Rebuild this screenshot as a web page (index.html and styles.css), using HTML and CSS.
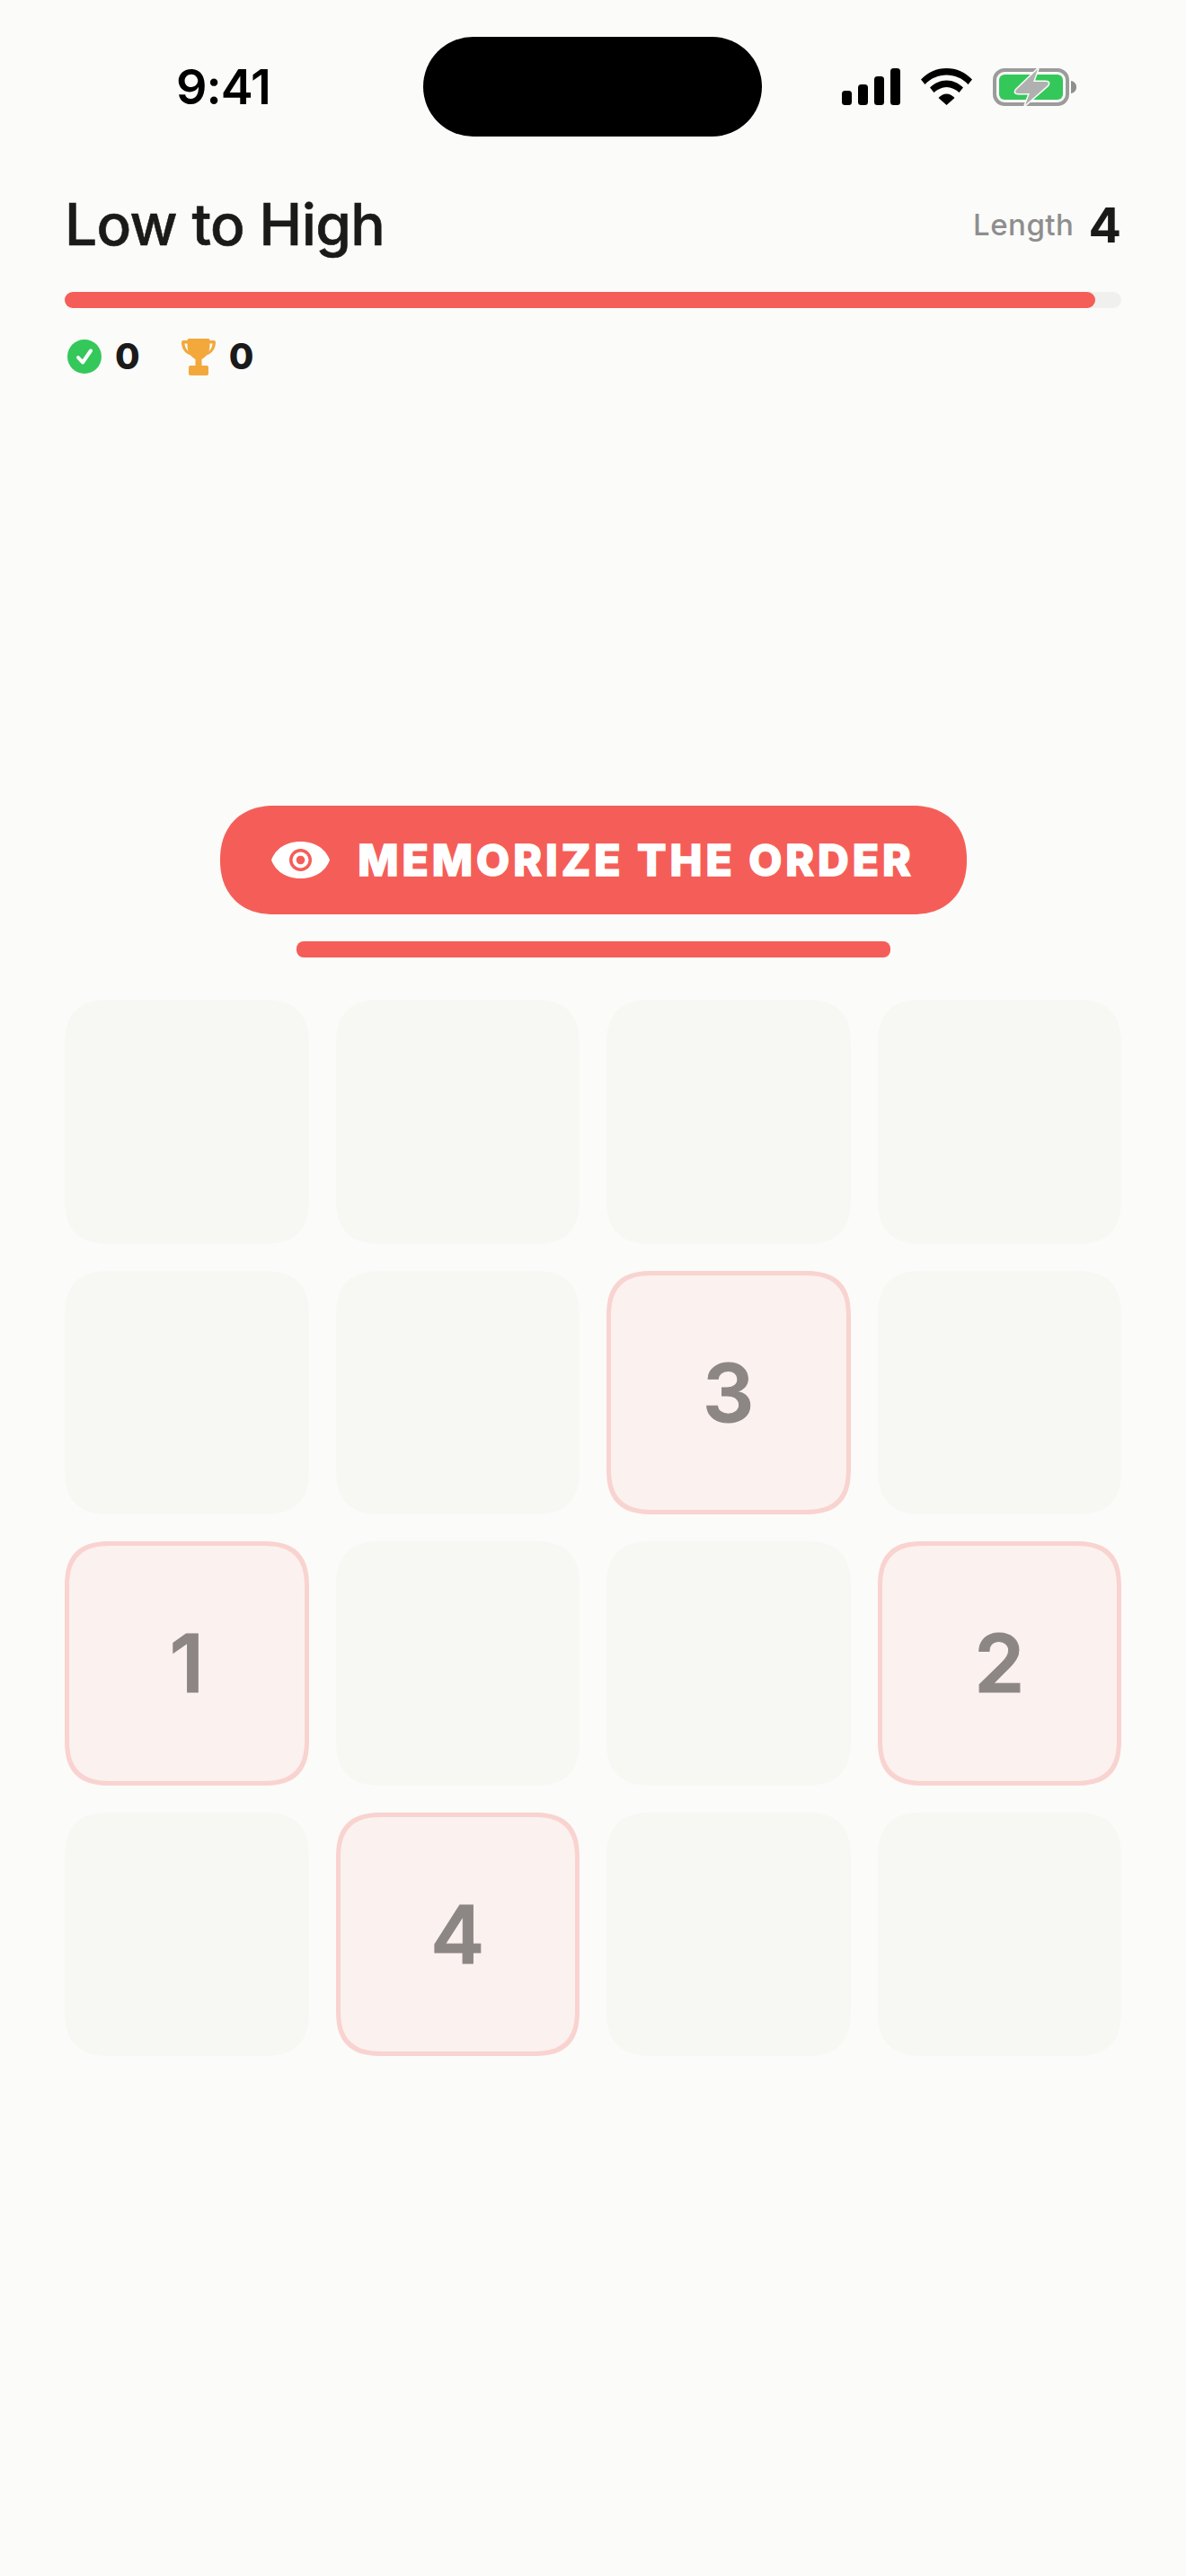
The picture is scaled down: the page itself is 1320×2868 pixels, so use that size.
FILE: index.html
```html
<!DOCTYPE html>
<html>
<head>
	<title>Low to High</title>
	<meta charset="UTF-8">
	<link rel="stylesheet" href="styles.css">
</head>
<body>
	<div class="statusbar">
		<div class="time">9:41</div>
		<div class="notch"></div>
		<div class="status-icons">
			<svg class="signal" width="65" height="41" viewBox="0 0 65 41">
				<rect x="0" y="25" width="11" height="16" rx="3.5"/>
				<rect x="18" y="18" width="11" height="23" rx="3.5"/>
				<rect x="36" y="9" width="11" height="32" rx="3.5"/>
				<rect x="54" y="0" width="11" height="41" rx="3.5"/>
			</svg>
			<svg class="wifi" width="57" height="41" viewBox="0 0 57 41">
				<path d="M0 12.5C7.5 4.5 17.5 0 28.5 0S49.500 4.500 57 12.500L52.500 18C46 11 37.500 7.500 28.500 7.500S11 11 4.500 18Z"/>
				<path d="M10 21.500C15 16.500 21.500 13.500 28.500 13.500S42 16.500 47 21.500L42.500 27C38.500 23.500 33.500 21 28.500 21S18.500 23.500 14.500 27Z"/>
				<path d="M19.500 33C22 30.300 25 28.500 28.500 28.500S35 30.300 37.500 33L28.500 41Z"/>
			</svg>
			<svg class="battery" width="93" height="42" viewBox="0 0 93 42">
				<rect x="2" y="2" width="81" height="38" rx="11" fill="none" stroke="#9b9b9b" stroke-width="4"/>
				<rect x="7" y="7" width="71" height="28" rx="6" fill="#34c85a"/>
				<path d="M87 14C90.500 14.500 93 17 93 21S90.500 27.500 87 28Z" fill="#8f8f8f"/>
				<path d="M50 1L26 24Q23.500 28 28 28L41 28L36 41L61 19Q63.500 15 59 15L45 15Z" fill="#b0b0b0" stroke="#fbfbf9" stroke-width="3" paint-order="stroke" stroke-linejoin="round"/>
			</svg>
		</div>
	</div>

	<div class="game">
		<div class="title-row">
			<h1 class="title">Low to High</h1>
			<div class="length"><span class="length-label">Length</span><span class="length-value">4</span></div>
		</div>

		<div class="progress"><div class="progress-fill" style="width: 97.5%"></div></div>

		<div class="stats">
			<div class="stat">
				<svg width="38" height="38" viewBox="0 0 38 38">
					<circle cx="19" cy="19" r="19" fill="#34c85a"/>
					<path d="M12 20L17 25.500L26 12.500" fill="none" stroke="#fff" stroke-width="4" stroke-linecap="round" stroke-linejoin="round"/>
				</svg>
				<span class="stat-value">0</span>
			</div>
			<div class="stat">
				<svg width="38" height="41" viewBox="0 0 38 41">
					<path d="M8 0H30Q31.500 0 31.500 2H36Q38 2 38 4C38 11 34.500 16 28 18.500C26 20.500 24 22 22.500 23V30H28Q30 30 30 32V39Q30 41 28 41H10Q8 41 8 39V32Q8 30 10 30H15.500V23C14 22 12 20.500 10 18.500C3.500 16 0 11 0 4Q0 2 2 2H6.500Q6.500 0 8 0Z" fill="#f3a83c"/>
					<path d="M3.500 5.500C3.800 9 5 12 7.500 14C6.800 11.500 6.500 8.500 6.500 5.500ZM34.500 5.500C34.200 9 33 12 30.500 14C31.200 11.500 31.500 8.500 31.500 5.500Z" fill="#fbfbf9"/>
				</svg>
				<span class="stat-value">0</span>
			</div>
		</div>

		<div class="prompt">
			<div class="prompt-pill">
				<svg width="65" height="41" viewBox="0 0 65 41">
					<path d="M0 20.500C4 10 14 0 32.500 0S61 10 65 20.500C61 31 51 41 32.500 41S4 31 0 20.500Z" fill="#fff"/>
					<circle cx="32.500" cy="20.500" r="12.500" fill="#f55e58"/>
					<circle cx="32.500" cy="20.500" r="9" fill="#fff"/>
					<circle cx="32.500" cy="20.500" r="4.800" fill="#f55e58"/>
				</svg>
				<span class="prompt-text">MEMORIZE THE ORDER</span>
			</div>
			<div class="timer"></div>
		</div>

		<div class="board">
			<div class="cell"></div>
			<div class="cell"></div>
			<div class="cell"></div>
			<div class="cell"></div>
			<div class="cell"></div>
			<div class="cell"></div>
			<div class="cell lit">3</div>
			<div class="cell"></div>
			<div class="cell lit">1</div>
			<div class="cell"></div>
			<div class="cell"></div>
			<div class="cell lit">2</div>
			<div class="cell"></div>
			<div class="cell lit">4</div>
			<div class="cell"></div>
			<div class="cell"></div>
		</div>
	</div>
</body>
</html>
```

FILE: styles.css
```css
body {
	margin: 0;
	height: 2868px;
	overflow: hidden;
	background-color: #fbfbf9;
	color: #1a1a1a;
	font-family: "Inter", "Liberation Sans", sans-serif;
}

.statusbar {
	display: flex;
	align-items: center;
	height: 111px;
	padding: 41px 118px 0 196px;
}

.time {
	width: 275px;
	font-size: 54px;
	font-weight: 600;
	line-height: 1;
	color: #000000;
	letter-spacing: -1px;
}

.notch {
	width: 377px;
	height: 111px;
	background-color: #000000;
	border-radius: 56px;
}

.status-icons {
	display: flex;
	align-items: center;
	gap: 23px;
	margin-left: 89px;
}

.game {
	padding: 0 72px;
}

.title-row {
	display: flex;
	justify-content: space-between;
	align-items: center;
	margin-top: 58px;
	height: 80px;
}

.title {
	margin: 0;
	font-size: 64px;
	font-weight: 500;
	line-height: 80px;
	letter-spacing: -0.6px;
	-webkit-text-stroke: 0.6px #1a1a1a;
}

.length {
	display: flex;
	align-items: center;
	gap: 16px;
}

.length-label {
	font-size: 33px;
	font-weight: 500;
	color: #8e8e8e;
	letter-spacing: 0.5px;
}

.length-value {
	font-size: 54px;
	font-weight: 700;
}

.progress {
	height: 18px;
	margin-top: 35px;
	background-color: #f0f0ee;
	border-radius: 9px;
}

.progress-fill {
	height: 100%;
	background-color: #f55e58;
	border-radius: 9px;
}

.stats {
	display: flex;
	gap: 46px;
	align-items: center;
	height: 42px;
	margin-top: 33px;
	padding-left: 3px;
}

.stat {
	display: flex;
	align-items: center;
	gap: 15px;
}

.stat-value {
	font-size: 40px;
	font-weight: 800;
	line-height: 42px;
}

.prompt {
	display: flex;
	flex-direction: column;
	align-items: center;
	margin-top: 479px;
}

.prompt-pill {
	display: flex;
	align-items: center;
	justify-content: center;
	gap: 31px;
	width: 831px;
	height: 121px;
	background-color: #f55e58;
	border-radius: 60px;
	corner-shape: superellipse(1.15);
}

.prompt-text {
	font-size: 48px;
	font-weight: 800;
	line-height: 1;
	color: #ffffff;
	letter-spacing: 4px;
	-webkit-text-stroke: 1.5px #ffffff;
}

.timer {
	width: 661px;
	height: 18px;
	margin-top: 30px;
	background-color: #f55e58;
	border-radius: 8px;
}

.board {
	display: grid;
	grid-template-columns: repeat(4, 1fr);
	grid-auto-rows: 271.5px;
	gap: 30px;
	margin-top: 47px;
}

.cell {
	display: flex;
	align-items: center;
	justify-content: center;
	box-sizing: border-box;
	background-color: #f7f8f4;
	border-radius: 52px;
	corner-shape: superellipse(1.4);
}

.cell.lit {
	background-color: #fbf1ef;
	border: 5px solid #f9d3d0;
	color: #8c8685;
	font-size: 90px;
	font-weight: 600;
	-webkit-text-stroke: 1px #8c8685;
}
```
